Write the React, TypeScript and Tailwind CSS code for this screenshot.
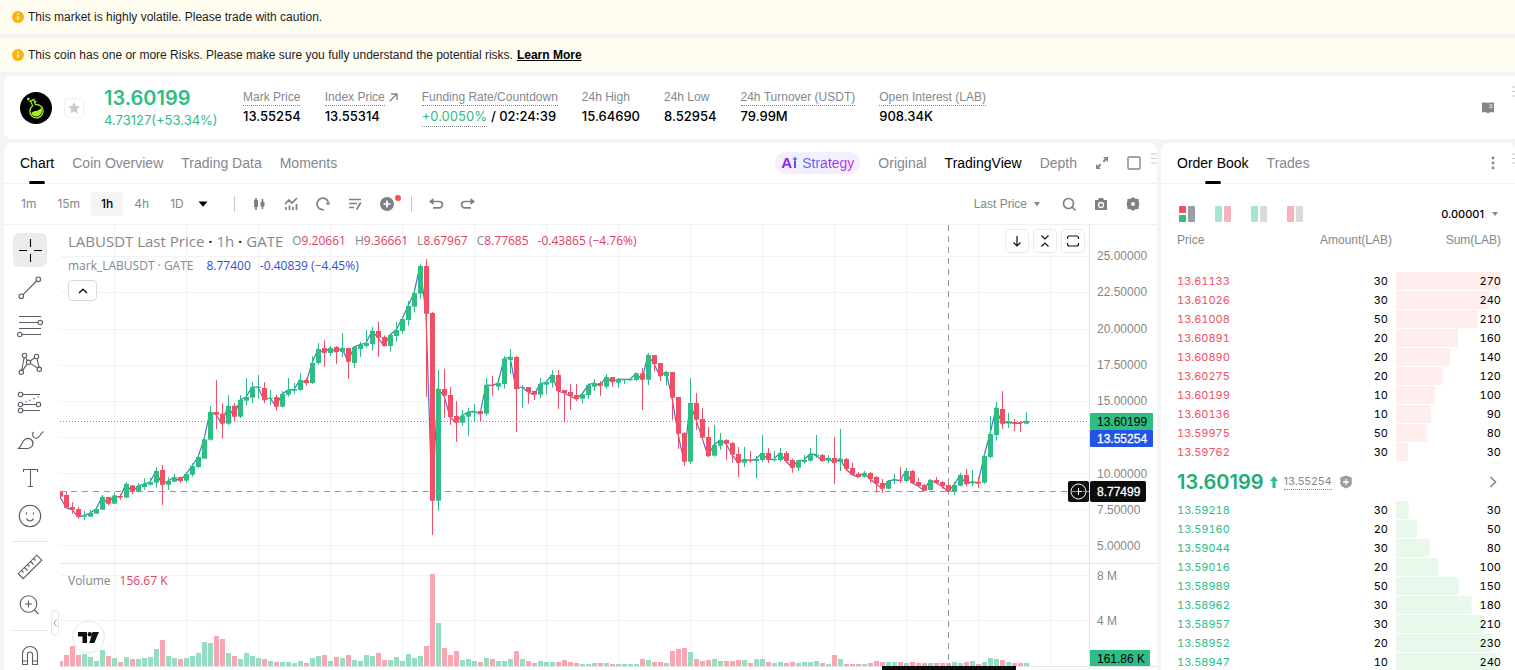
import React, { useState } from "react";

type Candle = [dir: string, high: number, top: number, bottom: number, low: number];

// dir, high, body top, body bottom, low (offsets from the top grid line, 3 units per pixel)
const candles: Candle[] = [
  ["r", 722, 726, 740, 740], ["r", 724, 735, 773, 773], ["r", 757, 771, 779, 791], ["r", 770, 777, 800, 806],
  ["g", 783, 797, 799, 809], ["g", 780, 789, 800, 800], ["g", 772, 777, 791, 791], ["g", 735, 741, 779, 779],
  ["r", 741, 741, 761, 765], ["g", 728, 737, 761, 761], ["r", 732, 738, 742, 749], ["g", 697, 702, 743, 743],
  ["r", 705, 706, 725, 733], ["g", 699, 708, 725, 727], ["g", 685, 702, 711, 719], ["g", 683, 696, 704, 706],
  ["g", 651, 663, 698, 713], ["r", 645, 660, 704, 765], ["g", 682, 693, 704, 719], ["g", 672, 682, 695, 697],
  ["r", 681, 681, 693, 698], ["g", 667, 672, 692, 698], ["g", 640, 648, 674, 680], ["g", 610, 621, 651, 654],
  ["g", 558, 568, 626, 626], ["g", 468, 486, 569, 572], ["r", 390, 486, 494, 537], ["r", 460, 491, 521, 566],
  ["g", 435, 468, 521, 525], ["r", 459, 467, 500, 515], ["g", 435, 450, 500, 504], ["g", 384, 441, 452, 466],
  ["g", 396, 411, 443, 459], ["g", 375, 411, 413, 447], ["r", 396, 414, 450, 459], ["g", 420, 444, 447, 465],
  ["r", 434, 441, 470, 482], ["g", 424, 432, 470, 473], ["g", 384, 420, 434, 440], ["g", 399, 418, 423, 431],
  ["g", 369, 390, 420, 422], ["r", 384, 390, 399, 407], ["g", 318, 339, 399, 402], ["g", 279, 297, 339, 344],
  ["r", 270, 294, 308, 350], ["g", 288, 294, 309, 318], ["r", 288, 291, 306, 342], ["g", 249, 294, 306, 322],
  ["r", 294, 294, 335, 386], ["g", 288, 291, 339, 354], ["g", 276, 284, 297, 321], ["g", 240, 279, 288, 293],
  ["g", 231, 243, 282, 302], ["r", 215, 243, 263, 320], ["r", 256, 261, 288, 290], ["g", 250, 255, 288, 305],
  ["g", 216, 240, 258, 275], ["g", 200, 207, 243, 251], ["g", 153, 168, 210, 227], ["g", 120, 129, 170, 188],
  ["g", 42, 48, 131, 146], ["r", 27, 48, 191, 440], ["r", 186, 189, 752, 855], ["g", 360, 417, 752, 782],
  ["r", 357, 417, 437, 504], ["r", 411, 435, 501, 525], ["r", 453, 498, 518, 576], ["g", 480, 497, 518, 527],
  ["g", 474, 486, 500, 558], ["g", 462, 484, 488, 515], ["r", 482, 483, 492, 515], ["g", 384, 405, 491, 497],
  ["r", 378, 404, 407, 437], ["g", 384, 399, 410, 422], ["g", 318, 326, 402, 416], ["g", 297, 321, 330, 372],
  ["r", 318, 321, 417, 546], ["g", 405, 411, 414, 474], ["r", 411, 411, 426, 461], ["r", 422, 423, 434, 450],
  ["g", 384, 402, 434, 444], ["g", 393, 396, 404, 431], ["g", 360, 375, 398, 413], ["r", 360, 375, 423, 477],
  ["r", 420, 420, 429, 518], ["r", 402, 426, 438, 480], ["r", 402, 435, 447, 453], ["g", 428, 432, 446, 461],
  ["g", 400, 405, 435, 447], ["g", 387, 399, 410, 423], ["r", 393, 399, 407, 437], ["g", 372, 381, 410, 416],
  ["r", 381, 381, 396, 411], ["g", 385, 387, 398, 413], ["g", 387, 388, 390, 402], ["g", 385, 388, 391, 393],
  ["g", 369, 370, 390, 392], ["r", 354, 370, 389, 480], ["g", 309, 315, 389, 405], ["r", 315, 315, 342, 365],
  ["r", 339, 339, 378, 393], ["g", 363, 366, 378, 406], ["r", 366, 366, 443, 510], ["r", 441, 441, 551, 597],
  ["r", 546, 549, 635, 647], ["g", 384, 459, 635, 642], ["r", 429, 459, 509, 540], ["r", 474, 507, 563, 570],
  ["r", 531, 561, 618, 621], ["g", 525, 585, 617, 620], ["g", 549, 570, 587, 600], ["r", 567, 570, 581, 630],
  ["r", 576, 579, 614, 638], ["r", 591, 612, 638, 681], ["g", 591, 628, 638, 651], ["r", 603, 629, 632, 638],
  ["g", 618, 627, 633, 684], ["g", 555, 609, 630, 636], ["r", 594, 609, 629, 639], ["g", 603, 627, 631, 635],
  ["g", 594, 609, 630, 635], ["r", 603, 609, 633, 639], ["r", 626, 630, 653, 668], ["g", 630, 632, 653, 663],
  ["g", 615, 630, 636, 641], ["g", 594, 612, 632, 635], ["g", 555, 614, 619, 624], ["r", 612, 615, 633, 633],
  ["g", 615, 624, 632, 639], ["r", 561, 624, 638, 702], ["g", 537, 626, 636, 663], ["r", 624, 627, 657, 663],
  ["r", 639, 654, 674, 674], ["r", 666, 671, 681, 683], ["g", 663, 669, 680, 683], ["r", 666, 669, 687, 699],
  ["r", 678, 681, 701, 728], ["r", 687, 699, 716, 729], ["g", 690, 693, 716, 717], ["g", 672, 689, 692, 702],
  ["r", 651, 689, 692, 699], ["g", 654, 663, 693, 696], ["r", 660, 663, 699, 702], ["r", 684, 696, 708, 710],
  ["r", 701, 705, 722, 723], ["g", 687, 690, 720, 720], ["r", 681, 690, 699, 702], ["r", 693, 696, 709, 717],
  ["r", 693, 705, 725, 729], ["g", 696, 705, 726, 735], ["g", 668, 675, 707, 709], ["r", 657, 675, 702, 710],
  ["g", 660, 695, 700, 708], ["r", 681, 695, 700, 714], ["g", 609, 618, 698, 701], ["g", 498, 552, 621, 626],
  ["g", 456, 474, 555, 572], ["r", 423, 477, 521, 537], ["g", 489, 515, 521, 534], ["r", 507, 516, 520, 543],
  ["r", 513, 517, 520, 546], ["g", 486, 513, 521, 521],
];

const volumes = [
  5, 11, 20, 11, 12, 9, 5, 16, 10, 8, 4, 9, 7, 7, 8, 9, 17, 26, 10, 8, 7, 8, 10, 13, 24, 23, 30, 27, 13, 10, 7, 13,
  10, 8, 7, 5, 4, 4, 4, 3, 5, 3, 8, 10, 11, 5, 9, 8, 11, 6, 5, 11, 10, 13, 6, 6, 9, 5, 12, 8, 10, 20, 92, 43, 18,
  11, 15, 6, 7, 5, 4, 8, 7, 5, 5, 7, 15, 7, 5, 3, 5, 4, 4, 4, 6, 4, 3, 2, 2, 3, 3, 3, 2, 2, 2, 2, 2, 7, 6, 4, 4, 3,
  15, 17, 18, 14, 7, 5, 6, 7, 5, 5, 5, 6, 6, 3, 7, 7, 4, 3, 4, 3, 4, 3, 4, 4, 5, 3, 2, 11, 7, 2, 2, 2, 2, 3, 5, 4,
  4, 4, 4, 3, 4, 3, 3, 3, 3, 3, 3, 4, 3, 4, 5, 2, 4, 8, 7, 6, 4, 3, 3, 3,
];

const asks: [string, number, number][] = [
  ["13.61133", 30, 270],
  ["13.61026", 30, 240],
  ["13.61008", 50, 210],
  ["13.60891", 20, 160],
  ["13.60890", 20, 140],
  ["13.60275", 20, 120],
  ["13.60199", 10, 100],
  ["13.60136", 10, 90],
  ["13.59975", 50, 80],
  ["13.59762", 30, 30],
];

const bids: [string, number, number][] = [
  ["13.59218", 30, 30],
  ["13.59160", 20, 50],
  ["13.59044", 30, 80],
  ["13.59016", 20, 100],
  ["13.58989", 50, 150],
  ["13.58962", 30, 180],
  ["13.58957", 30, 210],
  ["13.58952", 20, 230],
  ["13.58947", 10, 240],
];

const UP = "#2ebd85";
const DOWN = "#f24e66";

const toY = (v: number) => 25 + v / 3;
const toX = (i: number) => i * 6;

const InfoDot = () => (
  <svg width="12" height="12" viewBox="0 0 12 12" aria-hidden="true">
    <circle cx="6" cy="6" r="6" fill="#fbb40d" />
    <path d="M6 5v4M6 2.6v1.4" stroke="#fff" strokeWidth="1.3" />
  </svg>
);

const Banner = ({ children }: { children: React.ReactNode }) => (
  <div className="flex h-[34px] shrink-0 items-center gap-1 bg-[#fffcf0] px-3 text-xs text-[#1c1c1c]">
    <InfoDot />
    {children}
  </div>
);

const Grip = ({ clipped }: { clipped?: boolean }) => (
  <svg
    width="6"
    height="11"
    viewBox="0 0 6 11"
    className={clipped ? "absolute -right-[3px] top-[10px]" : "absolute right-0 top-[10px]"}
    aria-hidden="true"
  >
    <path d="M0 1h6M0 5.500h6M0 10h6" stroke="#c6c8ca" strokeWidth="1.200" />
  </svg>
);

interface StatProps {
  label: string;
  dotted?: boolean;
  icon?: React.ReactNode;
  children: React.ReactNode;
}

const Stat = ({ label, dotted, icon, children }: StatProps) => (
  <div className="flex flex-col items-start">
    <div className="flex h-[19px] items-center gap-1 text-xs text-[#84888c]">
      <span className={dotted ? "border-b border-dotted border-[#84888c]" : "border-b border-transparent"}>{label}</span>
      {icon}
    </div>
    <div className="flex h-5 items-center font-['Inter',sans-serif] text-[13px] font-medium text-black">{children}</div>
  </div>
);

const MarketHeader = () => (
  <header className="relative ml-1 flex h-[63px] shrink-0 items-center rounded-l-lg bg-white pl-4 pr-5">
    <svg width="32" height="32" viewBox="0 0 32 32" aria-hidden="true">
      <circle cx="16" cy="16" r="16" fill="#000" />
      <g transform="rotate(-22 16 18)" fill="none" stroke="#a6ef1f" strokeWidth="1.2" strokeLinecap="round">
        <path d="M13.4 7.500h5M14.400 7.700v5.200a6.600 6.600 0 1 0 3.200 0V7.700" />
        <path d="M10.300 19.500c3-2.600 6 1.600 11.400-1.500a5.700 5.700 0 1 1-11.400 1.500z" fill="#a6ef1f" stroke="none" />
        <circle cx="13" cy="5" r=".8" />
        <circle cx="18.500" cy="10" r=".5" />
      </g>
    </svg>
    <button aria-label="Add to favorites" className="ml-3 flex size-5 items-center justify-center rounded border border-[#f0f1f2]">
      <svg width="14" height="14" viewBox="0 0 14 14">
        <path d="M7 1l1.800 3.900 4.200.5-3.100 2.900.8 4.200L7 10.400l-3.700 2.100.8-4.200L1 5.400l4.200-.5z" fill="#c9cbcd" />
      </svg>
    </button>
    <div className="ml-5 w-[139px] font-['Inter',sans-serif]">
      <div className="text-[20px] font-semibold leading-6 text-[#2ebd85]">13.60199</div>
      <div className="text-[13px] leading-5 text-[#2ebd85]">4.73127(+53.34%)</div>
    </div>
    <div className="flex gap-6">
      <Stat label="Mark Price" dotted>13.55254</Stat>
      <Stat
        label="Index Price"
        dotted
        icon={
          <svg width="9" height="9" viewBox="0 0 9 9" fill="none" stroke="#84888c" strokeWidth="1.400">
            <path d="M.7 8.300L8 1M2 1h6v6" />
          </svg>
        }
      >
        13.55314
      </Stat>
      <Stat label="Funding Rate/Countdown" dotted>
        <span className="border-b border-dotted border-[#84888c] font-normal text-[#2ebd85]">+0.0050%</span>
        <span className="ml-1">/ 02:24:39</span>
      </Stat>
      <Stat label="24h High">15.64690</Stat>
      <Stat label="24h Low">8.52954</Stat>
      <Stat label="24h Turnover (USDT)" dotted>79.99M</Stat>
      <Stat label="Open Interest (LAB)" dotted>908.34K</Stat>
    </div>
    <button aria-label="Guide" className="ml-auto">
      <svg width="14" height="12" viewBox="0 0 14 12">
        <path d="M1 .5h4.500q1 0 1.500.7.500-.7 1.500-.7H13v9.700H8.700L7 11.500 5.300 10.200H1z" fill="#84888c" />
        <path d="M8.500 3h3M8.500 5.300h3" stroke="#fff" />
      </svg>
    </button>
    <Grip clipped />
  </header>
);

const Tab = ({ active, onClick, children }: { active: boolean; onClick: () => void; children: string }) => (
  <button
    onClick={onClick}
    className={
      active
        ? "flex h-[41px] flex-col items-center text-sm font-medium text-black"
        : "flex h-[41px] flex-col items-center text-sm font-medium text-[#84888c]"
    }
  >
    <span className="h-[38px] leading-[40px]">{children}</span>
    {active && <span className="h-[3px] w-4 rounded-sm bg-black" />}
  </button>
);

const ChartTabs = () => {
  const [tab, setTab] = useState("Chart");

  return (
    <div className="flex h-[41px] items-center border-b border-[#f0f1f2] pl-4 pr-4">
      <div className="flex gap-[18px]">
        {["Chart", "Coin Overview", "Trading Data", "Moments"].map((t) => (
          <Tab key={t} active={t === tab} onClick={() => setTab(t)}>
            {t}
          </Tab>
        ))}
      </div>
      <div className="ml-auto flex items-center gap-[18px] text-sm text-[#84888c]">
        <button className="flex h-[22px] items-center rounded-full bg-[#f3effe] px-[6px] font-medium">
          <span className="text-[15px] font-bold text-[#8a2be8]">A</span>
          <svg width="6" height="14" viewBox="0 0 6 14" className="mr-1">
            <path d="M3 0l.8 2.200L6 3l-2.200.8L3 6l-.8-2.200L0 3l2.200-.8z" fill="#3e62f5" />
            <path d="M3 5v7" stroke="#5a4df0" strokeWidth="2" />
          </svg>
          <span className="bg-linear-to-r from-[#2e6cf6] via-[#7a3cf0] to-[#d61ee0] bg-clip-text text-transparent">Strategy</span>
        </button>
        <button>Original</button>
        <button className="font-medium text-black">TradingView</button>
        <button>Depth</button>
        <button aria-label="Expand">
          <svg width="14" height="14" viewBox="0 0 14 14" fill="#84888c">
            <path d="M8 1h5v5l-1.800-1.800L9 6.400 7.600 5l2.200-2.200zM6 13H1V8l1.800 1.800L5 7.600 6.400 9l-2.200 2.200z" />
          </svg>
        </button>
        <button aria-label="Fullscreen">
          <svg width="14" height="14" viewBox="0 0 14 14">
            <rect x="1" y="1" width="12" height="12" rx="1" fill="none" stroke="#84888c" strokeWidth="1.400" />
          </svg>
        </button>
      </div>
    </div>
  );
};

const ToolIcon = ({ label, children }: { label: string; children: React.ReactNode }) => (
  <button aria-label={label}>
    <svg width="16" height="16" viewBox="0 0 16 16" fill="none" stroke="#7d8185" strokeWidth="1.700">
      {children}
    </svg>
  </button>
);

const ChartToolbar = () => {
  const [interval, setInterval] = useState("1h");

  return (
    <div className="flex h-[41px] items-center border-b border-[#f0f1f2] pl-[7px] pr-4 text-xs text-[#84888c]">
      <div className="flex gap-px font-['Inter',sans-serif]">
        {["1m", "15m", "1h", "4h", "1D"].map((t) => (
          <button
            key={t}
            onClick={() => setInterval(t)}
            className={t === interval ? "h-6 rounded bg-[#f3f4f5] px-[10px] font-medium text-black" : "h-6 px-[10px]"}
          >
            {t}
          </button>
        ))}
      </div>
      <button aria-label="More intervals" className="ml-1">
        <svg width="10" height="6" viewBox="0 0 10 6">
          <path d="M.5.500h9L5 5.700z" fill="#000" />
        </svg>
      </button>
      <span className="ml-[26px] h-4 w-px bg-[#c6c8ca]" />
      <div className="ml-4 flex gap-4">
        <ToolIcon label="Chart type">
          <path d="M5 2v12M11.500 3v10" />
          <path d="M3 4h4v7H3zM9.500 6h4v4.500h-4z" fill="#7d8185" stroke="none" />
        </ToolIcon>
        <ToolIcon label="Indicators">
          <path d="M2 8l4-4 3 3 5-5M3 14v-3M6.500 14V9.500M10 14v-3M13.500 14V8" />
        </ToolIcon>
        <ToolIcon label="Replay">
          <path d="M9 13.600A5.800 5.800 0 1 1 13.300 6" />
          <path d="M10.500 6.500h5L13 9.500z" fill="#7d8185" stroke="none" />
        </ToolIcon>
        <ToolIcon label="Templates">
          <path d="M2 3.500h12M2 7.500h8M2 11.500h5M13.700 6.500l-4 7" />
        </ToolIcon>
        <button aria-label="Add order" className="relative">
          <svg width="16" height="16" viewBox="0 0 16 16">
            <circle cx="8" cy="8" r="7" fill="#7d8185" />
            <path d="M8 4.500v7M4.500 8h7" stroke="#fff" strokeWidth="1.700" />
          </svg>
          <span className="absolute -right-[6px] -top-px size-[6px] rounded-full bg-[#f4544c]" />
        </button>
      </div>
      <span className="ml-4 h-4 w-px bg-[#c6c8ca]" />
      <div className="ml-4 flex gap-4">
        <ToolIcon label="Undo">
          <path d="M3 5.500h8.200a3.200 3.200 0 0 1 0 6.400H5" />
          <path d="M5.500 2v7L1 5.500z" fill="#7d8185" stroke="none" />
        </ToolIcon>
        <ToolIcon label="Redo">
          <path d="M13 5.500H4.800a3.200 3.200 0 0 0 0 6.400H11" />
          <path d="M10.500 2v7L15 5.500z" fill="#7d8185" stroke="none" />
        </ToolIcon>
      </div>
      <div className="ml-auto flex items-center gap-4">
        <button className="mr-1 flex items-center gap-[6px]">
          Last Price
          <svg width="8" height="5" viewBox="0 0 8 5">
            <path d="M1 0h6L4 4.500z" fill="#84888c" />
          </svg>
        </button>
        <ToolIcon label="Search">
          <circle cx="7.500" cy="7.500" r="5" />
          <path d="M11 11l3.500 3.500" />
        </ToolIcon>
        <ToolIcon label="Snapshot">
          <path d="M2 4h3l1-2h4l1 2h3v10H2z" fill="#7d8185" stroke="none" />
          <circle cx="8" cy="9" r="2.500" stroke="#fff" strokeWidth="1.300" />
        </ToolIcon>
        <ToolIcon label="Settings">
          <path d="M8 1l2.300 1.800 3.200.2.300 3.200L14.500 8l-.7 1.800-.3 3.200-3.200.2L8 15l-2.300-1.800-3.200-.2-.3-3.200L1.500 8l.7-1.800.3-3.200 3.200-.2z" fill="#7d8185" stroke="none" />
          <circle cx="8" cy="8" r="2" fill="#fff" stroke="none" />
        </ToolIcon>
      </div>
    </div>
  );
};

const DrawTool = ({ label, active, children }: { label: string; active?: boolean; children: React.ReactNode }) => (
  <button aria-label={label} className={active ? "rounded-md bg-[#ececec]" : "rounded-md"}>
    <svg width="34" height="34" viewBox="0 0 34 34" fill="none" stroke={active ? "#000" : "#5a5d64"} strokeWidth="1.100">
      {children}
    </svg>
  </button>
);

const DrawingBar = () => (
  <div className="relative flex w-[56px] shrink-0 flex-col items-center gap-1 pr-1 pt-2">
    <DrawTool label="Cross" active>
      <path d="M6 17.500h8M21 17.500h8M17.500 6v8M17.500 21v8" />
    </DrawTool>
    <DrawTool label="Trend line">
      <circle cx="8.300" cy="25.300" r="2.300" />
      <circle cx="25.300" cy="8.300" r="2.300" />
      <path d="M10 23.600L23.600 10" />
    </DrawTool>
    <DrawTool label="Fib retracement">
      <path d="M6 7.500h22M6 13.500h19M6 19.500h22M9 25.500h19" />
      <circle cx="27.300" cy="13.500" r="2.200" />
      <circle cx="6.700" cy="25.500" r="2.200" />
    </DrawTool>
    <DrawTool label="Patterns">
      <path d="M11.200 10.700L8.700 23M12.600 10.500l1.600 3M17.200 14l4.500-3.200M24 11.600l2 8.500M9.500 23.400l4.700-6.300M17.300 16.400l7.200 4.600" />
      <circle cx="11.500" cy="8.500" r="2.200" />
      <circle cx="23.500" cy="9.500" r="2.200" />
      <circle cx="15.500" cy="15.300" r="2.200" />
      <circle cx="8.300" cy="25.300" r="2.200" />
      <circle cx="26.300" cy="22.300" r="2.200" />
    </DrawTool>
    <DrawTool label="Forecasting">
      <circle cx="7.500" cy="9.500" r="2.200" />
      <circle cx="7.500" cy="19.500" r="2.200" />
      <circle cx="7.500" cy="25.500" r="2.200" />
      <circle cx="25.500" cy="19.500" r="2.200" />
      <path d="M10 9.500h17M10 19.500h13M10 25.500h17" />
      <path d="M12 17l15-5.500" strokeDasharray="1.500 3" />
    </DrawTool>
    <DrawTool label="Brush">
      <path d="M5.500 25.500c3.500-3 3.500-7.500 7-9.500 3-1.700 7.500.3 7.500 4.200 0 3-2.500 5.300-5.500 5.300zM14.500 15.500c3.500 0 5 2.500 5.200 5M20.700 9c-1.700 1.500-1.500 5 1.300 6 2.500.8 4-.8 5-2.500 1-1.800 2-3 3.500-4" />
    </DrawTool>
    <DrawTool label="Text">
      <path d="M10.500 11V8.500h14V11M17.500 8.500v17M15 25.500h5" />
    </DrawTool>
    <DrawTool label="Icons">
      <circle cx="17" cy="17" r="10.700" />
      <path d="M13.500 13.500v2M20.500 13.500v2M13.500 19.500q1 2.500 3.500 2.500t3.500-2.500" />
    </DrawTool>
    <span className="my-1 h-px w-9 bg-[#e4e5e7]" />
    <DrawTool label="Measure">
      <path d="M23.800 5.200l5 5L10.200 28.700l-5-5zM8.500 20.500l2 2M11.500 17.500l3 3M14.500 14.500l2 2M17.500 11.500l3 3M20.500 8.500l2 2" />
    </DrawTool>
    <DrawTool label="Zoom in">
      <circle cx="15.500" cy="16" r="8.300" />
      <path d="M21.500 22l4 4M15.500 12.500v7M12 16h7" />
    </DrawTool>
    <span className="my-1 h-px w-9 bg-[#e4e5e7]" />
    <DrawTool label="Magnet">
      <path d="M9.500 25.500V15a7.500 7.500 0 0 1 15 0v10.500h-5V15.500a2.500 2.500 0 0 0-5 0v10zM9.500 22h5M19.500 22h5" />
    </DrawTool>
    <button
      aria-label="Hide drawing toolbar"
      className="absolute right-px top-[385px] flex h-[26px] w-2 items-center justify-center rounded border border-[#e4e5e7] bg-white"
    >
      <svg width="4" height="8" viewBox="0 0 4 8" fill="none" stroke="#a0a3a7">
        <path d="M3.500.500L1 4l2.500 3.500" />
      </svg>
    </button>
  </div>
);

const PriceChart = () => {
  const closes = candles.map(([dir, , top, bottom], i) => `${toX(i)},${toY(dir === "g" ? top : bottom)}`).join(" ");
  const gridX = Array.from({ length: 14 }, (_, i) => 54.5 + i * 72);
  const gridY = [31.5, 67.5, 104.5, 140.5, 176.5, 212.5, 248.5, 284.5, 320.5, 350.5, 395.5];

  return (
    <svg width="100%" height="445" className="block">
      <g stroke="#f3f3f4">
        {gridX.map((x) => (
          <line key={x} x1={x} x2={x} y1="0" y2="441" />
        ))}
        {gridY.map((y) => (
          <line key={y} x1="0" x2="100%" y1={y} y2={y} />
        ))}
      </g>
      <line x1="0" x2="100%" y1="338.500" y2="338.500" stroke="#e2e3e5" />
      <line x1="0" x2="100%" y1="441.500" y2="441.500" stroke="#e2e3e5" />

      {volumes.map((v, i) => (
        <rect key={i} x={toX(i) - 2} y={441 - v} width="5" height={v} fill={candles[i][0] === "g" ? "#96dec2" : "#f8a6b2"} />
      ))}

      <polyline points={closes} fill="none" stroke="#4a6fd8" strokeWidth="1.200" />
      {candles.map(([dir, high, top, bottom, low], i) => {
        const color = dir === "g" ? UP : DOWN;
        return (
          <g key={i} fill={color}>
            <rect x={toX(i)} y={toY(high)} width="1" height={(low - high) / 3} />
            <rect x={toX(i) - 2} y={toY(top)} width="5" height={Math.max(1, (bottom - top) / 3)} />
          </g>
        );
      })}

      <line x1="0" x2="100%" y1="196.500" y2="196.500" stroke={UP} strokeDasharray="1 2" />
      <line x1="0" x2="100%" y1="266.500" y2="266.500" stroke="#969696" strokeDasharray="6 5" />
      <line x1="888.500" x2="888.500" y1="0" y2="441" stroke="#969696" strokeDasharray="6 5" />

      <circle cx="28.500" cy="412" r="16" fill="#fff" stroke="#e6e7e9" />
      <path d="M18 407h9v11h-4.500v-6.500H18zM32.500 407H39l-4.700 11h-5z" fill="#111" />
      <circle cx="29.800" cy="409.200" r="2.200" fill="#111" />
      <rect x="822" y="441" width="134" height="4" fill="#0d0d0d" />
    </svg>
  );
};

const priceTicks = [
  ["25.00000", 35],
  ["22.50000", 71],
  ["20.00000", 108],
  ["17.50000", 144],
  ["15.00000", 180],
  ["10.00000", 253],
  ["7.50000", 289],
  ["5.00000", 325],
  ["8 M", 355],
  ["4 M", 400],
] as const;

const PriceAxis = () => (
  <svg width="68" height="445" viewBox="0 0 68 445" className="shrink-0 overflow-visible text-xs">
    <path d="M.5 0v445" stroke="#e2e3e5" />
    <path d="M0 338.500h68M0 441.500h68" stroke="#e2e3e5" />
    <g fill="#84888c">
      {priceTicks.map(([label, y]) => (
        <text key={label} x="8" y={y}>
          {label}
        </text>
      ))}
    </g>
    <rect x="1" y="188" width="63" height="17" rx="1" fill={UP} />
    <text x="8" y="201" fill="#000">13.60199</text>
    <rect x="1" y="205" width="63" height="17" rx="1" fill="#2354e6" />
    <text x="8" y="218" fill="#fff" stroke="#fff" strokeWidth=".3">13.55254</text>
    <rect x="-21" y="256" width="21" height="21" rx="2" fill="#0d0d0d" />
    <rect x="1" y="256" width="56" height="21" rx="2" fill="#0d0d0d" />
    <circle cx="-10.500" cy="266.500" r="7.500" fill="none" stroke="#fff" />
    <path d="M-14 266.500h7M-10.500 263v7" stroke="#fff" />
    <text x="8" y="271" fill="#fff" stroke="#fff" strokeWidth=".3">8.77499</text>
    <rect x="1" y="425" width="60" height="16" fill={UP} />
    <text x="8" y="438" fill="#000">161.86 K</text>
  </svg>
);

const PaneButton = ({ label, children }: { label: string; children: React.ReactNode }) => (
  <button aria-label={label} className="flex size-6 items-center justify-center rounded border border-[#ececee] bg-white">
    <svg width="14" height="14" viewBox="0 0 14 14" fill="none" stroke="#111" strokeWidth="1.200">
      {children}
    </svg>
  </button>
);

const ChartLegend = () => (
  <div className="absolute left-2 top-[5px] font-['Open_Sans',sans-serif] text-xs text-[#84888c]">
    <div className="flex h-[22px] items-center gap-[9px]">
      <span className="text-[15px]">
        LABUSDT Last Price <b className="text-[#333]">·</b> 1h <b className="text-[#333]">·</b> GATE
      </span>
      <span>O<span className="text-[#e0405e]">9.20661</span></span>
      <span>H<span className="text-[#e0405e]">9.36661</span></span>
      <span>L<span className="text-[#e0405e]">8.67967</span></span>
      <span>C<span className="text-[#e0405e]">8.77685</span></span>
      <span className="text-[#e0405e]">-0.43865 (−4.76%)</span>
    </div>
    <div className="mt-[3px] flex h-[22px] items-center gap-[9px]">
      <span className="mr-1">mark_LABUSDT · GATE</span>
      <span className="text-[#2a52d8]">8.77400</span>
      <span className="text-[#2a52d8]">-0.40839 (−4.45%)</span>
    </div>
    <button aria-label="Collapse legend" className="mt-[3px] flex h-[21px] w-[29px] items-center justify-center rounded border border-[#d8dadd] bg-white">
      <svg width="10" height="6" viewBox="0 0 10 6" fill="none" stroke="#111" strokeWidth="1.500">
        <path d="M1 5l4-3.700L9 5" />
      </svg>
    </button>
  </div>
);

const ChartPanel = () => (
  <section className="relative ml-1 min-w-0 flex-1 rounded-t-lg bg-white">
    <ChartTabs />
    <ChartToolbar />
    <div className="flex">
      <DrawingBar />
      <div className="relative min-w-0 flex-1">
        <PriceChart />
        <ChartLegend />
        <div className="absolute left-2 top-[348px] flex gap-[9px] font-['Open_Sans',sans-serif] text-xs text-[#84888c]">
          <span>Volume</span>
          <span className="text-[#e0405e]">156.67 K</span>
        </div>
        <div className="absolute right-1 top-1 flex gap-1">
          <PaneButton label="Move pane down">
            <path d="M7 2v10M3.500 8.500L7 12l3.500-3.500" />
          </PaneButton>
          <PaneButton label="Collapse pane">
            <path d="M3.500 1.500L7 5l3.500-3.500M3.500 12.500L7 9l3.500 3.500" />
          </PaneButton>
          <PaneButton label="Maximize pane">
            <path d="M1.500 5V4q0-2 2-2h1.500M9 2h1.500q2 0 2 2v1M12.500 9v1q0 2-2 2H9M5 12H3.500q-2 0-2-2V9M5 2h4M5 12h4" />
          </PaneButton>
        </div>
      </div>
      <PriceAxis />
    </div>
    <Grip />
  </section>
);

const LayoutIcon = ({ left, right, split }: { left: string; right: string; split?: boolean }) => (
  <svg width="16" height="16" viewBox="0 0 16 16">
    {split ? (
      <>
        <rect width="7" height="7" rx="1" fill={DOWN} />
        <rect y="9" width="7" height="7" rx="1" fill={UP} />
      </>
    ) : (
      <rect width="7" height="16" rx="1" fill={left} />
    )}
    <rect x="9" width="7" height="16" rx="1" fill={right} />
  </svg>
);

const BookRows = ({ rows, side, max }: { rows: [string, number, number][]; side: "ask" | "bid"; max: number }) => (
  <tbody className="font-['Inter',sans-serif] text-[11px]">
    {rows.map(([price, amount, sum]) => (
      <tr key={price} className="h-[19px]">
        <td className={side === "ask" ? "p-0 text-[#f24e66]" : "p-0 text-[#2ebd85]"}>{price}</td>
        <td className="py-0 pl-0 pr-2 text-right text-black">{amount}</td>
        <td
          className={
            side === "ask"
              ? "bg-[linear-gradient(#ffeeed,#ffeeed)] bg-no-repeat p-0 text-right text-black"
              : "bg-[linear-gradient(#e8f8ea,#e8f8ea)] bg-no-repeat p-0 text-right text-black"
          }
          style={{ backgroundSize: `${(sum / max) * 100}% 18px` }}
        >
          {sum}
        </td>
      </tr>
    ))}
  </tbody>
);

const OrderBook = () => {
  const [tab, setTab] = useState("Order Book");

  return (
    <section className="relative w-[354px] shrink-0 rounded-t-lg bg-white">
      <div className="flex h-[41px] items-center gap-[18px] border-b border-[#f0f1f2] pl-4 pr-5">
        {["Order Book", "Trades"].map((t) => (
          <Tab key={t} active={t === tab} onClick={() => setTab(t)}>
            {t}
          </Tab>
        ))}
        <button aria-label="More" className="ml-auto">
          <svg width="4" height="14" viewBox="0 0 4 14" fill="#84888c">
            <circle cx="2" cy="2" r="1.400" />
            <circle cx="2" cy="7" r="1.400" />
            <circle cx="2" cy="12" r="1.400" />
          </svg>
        </button>
      </div>
      <div className="pl-4 pr-[14px]">
        <div className="mt-5 flex h-5 items-center gap-5 pl-[2px]">
          <button aria-label="Both sides"><LayoutIcon left="" right="#9c9fa2" split /></button>
          <button aria-label="Columns"><LayoutIcon left="#a5e6cc" right="#fbb0bd" /></button>
          <button aria-label="Bids only"><LayoutIcon left="#a5e6cc" right="#d9dadb" /></button>
          <button aria-label="Asks only"><LayoutIcon left="#fbb0bd" right="#d9dadb" /></button>
          <button className="ml-auto flex items-center gap-2 pr-[3px] font-['Inter',sans-serif] text-[11px] font-medium text-black">
            0.00001
            <svg width="6" height="4" viewBox="0 0 6 4">
              <path d="M0 0h6L3 4z" fill="#84888c" />
            </svg>
          </button>
        </div>
        <table className="mt-[6px] w-full table-fixed border-collapse tabular-nums">
          <thead>
            <tr className="h-[42px] align-top text-xs leading-5 text-[#84888c]">
              <th className="p-0 text-left font-normal">Price</th>
              <th className="py-0 pl-0 pr-1 text-right font-normal">Amount(LAB)</th>
              <th className="w-[105px] p-0 text-right font-normal">Sum(LAB)</th>
            </tr>
          </thead>
          <BookRows rows={asks} side="ask" max={270} />
        </table>
        <div className="flex h-[39px] items-center font-['Inter',sans-serif]">
          <span className="text-[20px] font-semibold text-[#20ad74]">13.60199</span>
          <svg width="8" height="12" viewBox="0 0 8 12" className="ml-[6px]">
            <path d="M4 0l4 5H5.500v7h-3V5H0z" fill={UP} />
          </svg>
          <span className="ml-[6px] border-b border-dotted border-[#84888c] text-[11px] leading-4 text-[#84888c]">13.55254</span>
          <svg width="12" height="14" viewBox="0 0 12 14" className="ml-2">
            <path d="M6 .5l5.700 2v6.500q0 2-5.700 4.500Q.3 11 .3 9V2.500z" fill="#9a9da1" />
            <path d="M6 4v6M3 7h6" stroke="#fff" strokeWidth="1.300" />
          </svg>
          <button aria-label="More trades" className="ml-auto pr-1">
            <svg width="8" height="12" viewBox="0 0 8 12" fill="none" stroke="#84888c" strokeWidth="1.600">
              <path d="M1.500 1L6.500 6l-5 5" />
            </svg>
          </button>
        </div>
        <table className="w-full table-fixed border-collapse tabular-nums">
          <colgroup>
            <col />
            <col />
            <col className="w-[105px]" />
          </colgroup>
          <BookRows rows={bids} side="bid" max={250} />
        </table>
      </div>
      <Grip clipped />
    </section>
  );
};

const App: React.FC = () => {
  return (
    <div className="flex h-screen flex-col gap-1 overflow-hidden bg-[#f3f4f5] font-['Liberation_Sans',sans-serif]">
      <Banner>This market is highly volatile. Please trade with caution.</Banner>
      <Banner>
        <span>This coin has one or more Risks. Please make sure you fully understand the potential risks.</span>
        <a href="#risks" className="font-semibold text-black underline">
          Learn More
        </a>
      </Banner>
      <MarketHeader />
      <main className="flex min-h-0 flex-1 gap-1 overflow-hidden">
        <ChartPanel />
        <OrderBook />
      </main>
    </div>
  );
};

export default App;
